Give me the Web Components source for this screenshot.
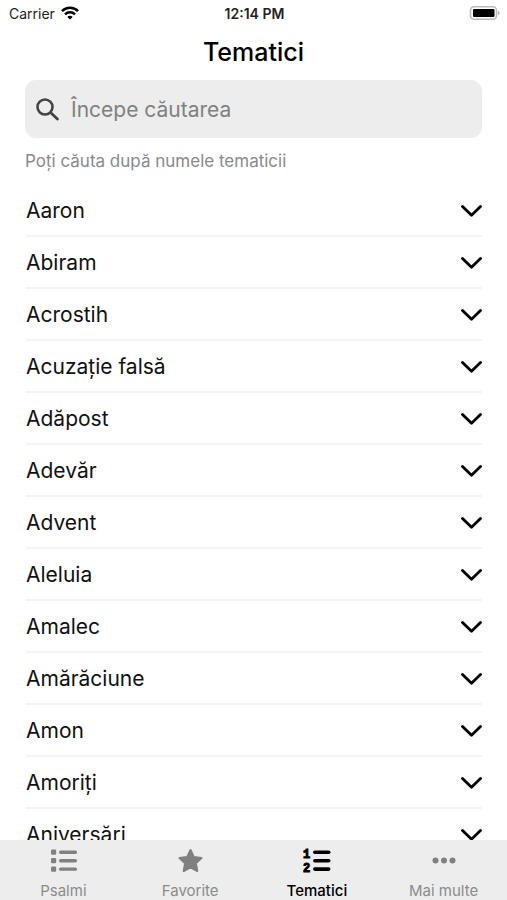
<!DOCTYPE html>
<html lang="ro">
<head>
<meta charset="utf-8">
<meta name="viewport" content="width=device-width, initial-scale=1">
<title>Tematici</title>
<style>
  html, body { margin: 0; height: 100%; background: #fff; }
  body { font-family: Inter, "Liberation Sans", sans-serif; color: #111; }
</style>
</head>
<body>
<psalm-app></psalm-app>

<script>
const define = (name, html, setup) => {
  const template = document.createElement('template');
  template.innerHTML = html;
  customElements.define(name, class extends HTMLElement {
    constructor() {
      super();
      this.attachShadow({ mode: 'open' }).append(template.content.cloneNode(true));
    }
    connectedCallback() { if (setup) setup(this, this.shadowRoot); }
  });
};

define('status-bar', `
  <style>
    :host { display: grid; grid-template-columns: 1fr auto 1fr; align-items: center; height: 26px; padding: 0 7px 0 9px; font-size: 14px; color: #222; }
    .carrier { display: flex; align-items: center; gap: 6px; }
    .time { font-weight: 600; }
    .battery { justify-self: end; }
    svg { display: block; }
  </style>
  <div class="carrier"><span>Carrier</span>
    <svg width="18" height="14" viewBox="0 0 18 14" fill="none" stroke="#000" stroke-width="2.5" aria-hidden="true">
      <path d="M1 5.2C5.4.7 12.6.7 17 5.2"/><path d="M4 8.3c2.8-2.8 7.2-2.8 10 0"/>
      <path d="M9 13.6 6.3 10.9c1.5-1.5 3.9-1.5 5.4 0z" fill="#000" stroke="none"/>
    </svg>
  </div>
  <span class="time">12:14 PM</span>
  <svg class="battery" width="31" height="14" viewBox="0 0 31 14" role="img" aria-label="Baterie plină">
    <rect x="1.5" y=".8" width="26" height="12.4" rx="3.5" fill="#fff" stroke="#bbb" stroke-width="1.6"/>
    <rect x="4" y="3" width="21.500" height="8" rx="1"/>
    <path d="M29 4.700c2 .8 2 3.800 0 4.600z" fill="#b0b0b0"/>
  </svg>`);

define('search-field', `
  <style>
    :host { display: block; }
    label { display: flex; align-items: center; gap: 12px; height: 58px; padding: 0 11px; border-radius: 11px; background: #ededed; }
    svg { flex: none; display: block; }
    input { flex: 1; min-width: 0; height: 42px; padding: 0; border: 0; outline: 0; background: none; font: inherit; font-size: 21px; color: #111; }
    input::placeholder { padding: 6px 0; color: #808080; opacity: 1; overflow: visible; }
    p { margin: 13px 0 0; font-size: 17px; line-height: 20px; color: #8a8a8a; }
  </style>
  <label>
    <svg width="23" height="23" viewBox="0 0 23 23" fill="none" stroke="#444" stroke-width="2.6" stroke-linecap="round" aria-hidden="true">
      <circle cx="9" cy="9" r="7.5"/><path d="m14.8 14.8 6.600 6.300" stroke-width="2.800"/>
    </svg>
    <input type="text" placeholder="Începe căutarea" aria-label="Începe căutarea" aria-describedby="hint">
  </label>
  <p id="hint">Poți căuta după numele tematicii</p>`);

define('topic-row', `
  <style>
    :host { display: block; border-bottom: 2px solid #f4f4f4; }
    button { display: flex; align-items: center; justify-content: space-between; width: 100%; height: 50px; padding: 0; border: 0; background: none; font: inherit; font-size: 21px; color: #111; text-align: left; }
    svg { display: block; flex: none; }
  </style>
  <button type="button" aria-expanded="false"><slot></slot>
    <svg width="22" height="14" viewBox="0 0 22 14" fill="none" stroke="#000" stroke-width="2.8" stroke-linecap="round" stroke-linejoin="round" aria-hidden="true"><path d="m2.500 3.400 9 8.800 9-8.800"/></svg>
  </button>`, (host, root) => {
    const button = root.querySelector('button');
    button.onclick = () => button.setAttribute('aria-expanded', button.getAttribute('aria-expanded') !== 'true');
  });

define('tab-item', `
  <style>
    :host { display: block; flex: 1; min-width: 0; color: #8b8b8b; }
    :host([active]) { color: #000; }
    a { display: flex; flex-direction: column; align-items: center; gap: 6px; padding-top: 7px; color: inherit; text-decoration: none; font-size: 15px; line-height: 20px; }
    :host([active]) a { font-weight: 500; }
    ::slotted(svg) { display: block; }
  </style>
  <a href="#"><slot name="icon"></slot><span><slot></slot></span></a>`, (host, root) => {
    if (host.hasAttribute('active')) root.querySelector('a').setAttribute('aria-current', 'page');
  });

define('tab-bar', `
  <style>
    :host { display: block; flex: none; background: #ededed; }
    nav { display: flex; height: 60px; }
    svg { color: #808080; }
    [active] svg { color: #000; }
  </style>
  <nav aria-label="Navigare">
    <tab-item>
      <svg slot="icon" width="28" height="28" viewBox="0 0 28 28" fill="currentColor" aria-hidden="true">
        <rect x="2" y="2.500" width="5.200" height="5.200" rx="1.300"/><rect x="2" y="11" width="5.200" height="5.200" rx="1.300"/><rect x="2" y="19.500" width="5.200" height="5.200" rx="1.300"/>
        <rect x="10" y="3.500" width="18" height="3.400" rx="1.600"/><rect x="10" y="12" width="18" height="3.400" rx="1.600"/><rect x="10" y="20.400" width="18" height="3.400" rx="1.600"/>
      </svg>Psalmi</tab-item>
    <tab-item>
      <svg slot="icon" width="28" height="28" viewBox="0 0 28 28" fill="currentColor" stroke="currentColor" stroke-width="2" stroke-linejoin="round" aria-hidden="true">
        <path d="m14.500 3 3.300 7 7.700 1-5.600 5.300 1.400 7.700-6.800-3.700L7.700 24l1.400-7.700L3.500 11l7.700-1z"/>
      </svg>Favorite</tab-item>
    <tab-item active>
      <svg slot="icon" width="28" height="28" viewBox="0 0 28 28" fill="currentColor" aria-hidden="true">
        <g font-family="Liberation Mono, monospace" font-size="12" font-weight="700" stroke="currentColor" stroke-width="1"><text x="0" y="10.500">1</text><text x="0" y="24.500">2</text></g>
        <rect x="10" y="3.500" width="17.500" height="3.600" rx="1.800"/><rect x="10" y="12" width="17.500" height="3.600" rx="1.800"/><rect x="10" y="20.300" width="17.500" height="3.600" rx="1.800"/>
      </svg>Tematici</tab-item>
    <tab-item>
      <svg slot="icon" width="28" height="28" viewBox="0 0 28 28" fill="currentColor" aria-hidden="true">
        <circle cx="5.500" cy="13.500" r="3"/><circle cx="14" cy="13.500" r="3"/><circle cx="22.500" cy="13.500" r="3"/>
      </svg>Mai multe</tab-item>
  </nav>`);

define('psalm-app', `
  <style>
    :host { display: flex; flex-direction: column; height: 100vh; }
    h1 { margin: 0; font-size: 25px; line-height: 52px; font-weight: 500; text-align: center; color: #000; }
    header { flex: none; }
    search-field { padding: 2px 25px 14px; }
    main { flex: 1; min-height: 0; overflow: hidden auto; scrollbar-width: none; padding: 0 25px 0 26px; }
  </style>
  <header>
    <status-bar></status-bar>
    <h1>Tematici</h1>
    <search-field></search-field>
  </header>
  <main></main>
  <tab-bar></tab-bar>`, (host, root) => {
    const topics = ['Aaron', 'Abiram', 'Acrostih', 'Acuzație falsă', 'Adăpost', 'Adevăr', 'Advent', 'Aleluia', 'Amalec', 'Amărăciune', 'Amon', 'Amoriți', 'Aniversări'];
    root.querySelector('main').replaceChildren(...topics.map(topic => {
      const row = document.createElement('topic-row');
      row.textContent = topic;
      return row;
    }));
  });
</script>
</body>
</html>
